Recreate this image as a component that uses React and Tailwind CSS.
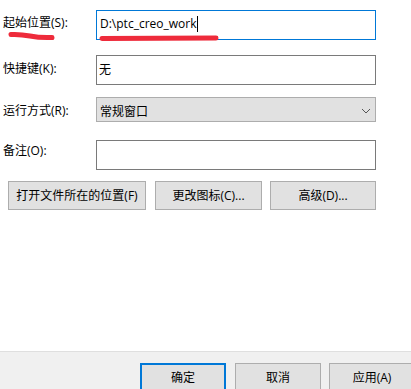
export default function App() {
  const font = { fontFamily: '"Open Sans", "Noto Sans CJK SC", "Microsoft YaHei", sans-serif' };
  return (
    <div
      className="relative w-[411px] h-[389px] overflow-hidden bg-white text-[12px] leading-[16px] text-[#000]"
      style={font}
    >
      <div className="h-[351px] flex flex-col">
        {/* Row 1 */}
        <div className="flex mt-[10px]">
          <div className="w-[96px] pl-[3px] pt-[5px]">起始位置(S):</div>
          <div className="relative w-[280px] h-[30px] border border-[#0078d7] pl-[3px] pt-[5px]">
            <span>D:\ptc_creo_work</span>
            <span className="inline-block align-top w-[1px] h-[16px] bg-black ml-[1px]" />
          </div>
        </div>
        {/* Row 2 */}
        <div className="flex mt-[15px]">
          <div className="w-[96px] pl-[3px] pt-[6px]">快捷键(K):</div>
          <div className="w-[280px] h-[30px] border border-[#7a7a7a] pl-[2px] pt-[6px]">无</div>
        </div>
        {/* Row 3 */}
        <div className="flex mt-[12px]">
          <div className="w-[96px] pl-[3px] pt-[6px]">运行方式(R):</div>
          <div className="w-[280px] h-[25px] border border-[#adadad] bg-[#e1e1e1] pl-[3px] pt-[6px] pr-[3px] flex items-start justify-between">
            <span>常规窗口</span>
            <svg width="10" height="6" viewBox="0 0 10 6" className="mt-[4px] mr-[1px]">
              <path d="M1 1 L5 5 L9 1" fill="none" stroke="#555" strokeWidth="1" />
            </svg>
          </div>
        </div>
        {/* Row 4 */}
        <div className="flex mt-[18px]">
          <div className="w-[96px] pl-[3px] pt-[3px]">备注(O):</div>
          <div className="w-[280px] h-[30px] border border-[#7a7a7a]" />
        </div>
        {/* Buttons */}
        <div className="flex mt-[11px] pl-[8px]">
          <div className="w-[138px] h-[29px] border border-[#adadad] bg-[#e1e1e1] flex items-center justify-center">
            打开文件所在的位置(F)
          </div>
          <div className="ml-[9px] w-[107px] h-[29px] border border-[#adadad] bg-[#e1e1e1] flex items-center justify-center">
            更改图标(C)...
          </div>
          <div className="ml-[8px] w-[106px] h-[29px] border border-[#adadad] bg-[#e1e1e1] flex items-center justify-center">
            高级(D)...
          </div>
        </div>
      </div>
      {/* Bottom bar */}
      <div className="h-[38px] border-t border-[#dfdfdf] bg-[#f0f0f0] pt-[11px] pl-[140px] flex">
        <div className="w-[86px] h-[30px] shrink-0 border-2 border-[#0078d7] bg-[#e1e1e1] flex items-center justify-center">
          确定
        </div>
        <div className="ml-[9px] w-[86px] h-[30px] shrink-0 border border-[#adadad] bg-[#e1e1e1] flex items-center justify-center">
          取消
        </div>
        <div className="ml-[8px] w-[86px] h-[30px] shrink-0 border border-[#adadad] bg-[#e1e1e1] flex items-center justify-center">
          应用(A)
        </div>
      </div>
      {/* Red annotation strokes */}
      <svg className="absolute left-0 top-0 pointer-events-none" width="411" height="389">
        <path d="M11 34.5 Q20 34 30 36 T52 37.5" fill="none" stroke="#ee2b3b" strokeWidth="5" strokeLinecap="round" />
        <path d="M102 38.5 Q160 38.5 216 38" fill="none" stroke="#ee2b3b" strokeWidth="5" strokeLinecap="round" />
      </svg>
    </div>
  );
}
